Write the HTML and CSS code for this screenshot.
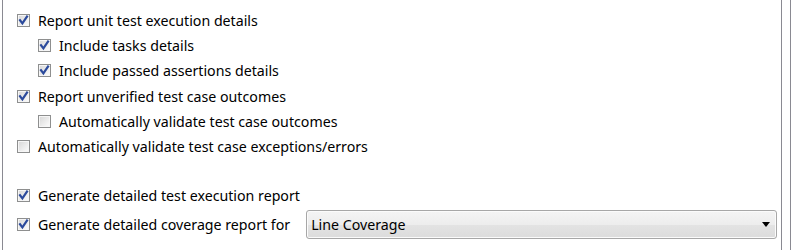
FILE: index.html
```html
<!DOCTYPE html>
<html>
<head>
<meta charset="utf-8">
<link rel="stylesheet" href="styles.css">
</head>
<body>
<div class="frame">
  <div class="panel">
    <label class="row"><span class="cb checked"><svg class="tick" viewBox="0 0 13 13" width="13" height="13"><polyline points="3,6.2 5.4,9.3 10,2.6"/></svg></span><span class="txt">Report unit test execution details</span></label>
    <label class="row sub"><span class="cb checked"><svg class="tick" viewBox="0 0 13 13" width="13" height="13"><polyline points="3,6.2 5.4,9.3 10,2.6"/></svg></span><span class="txt">Include tasks details</span></label>
    <label class="row sub"><span class="cb checked"><svg class="tick" viewBox="0 0 13 13" width="13" height="13"><polyline points="3,6.2 5.4,9.3 10,2.6"/></svg></span><span class="txt">Include passed assertions details</span></label>
    <label class="row tall"><span class="cb checked"><svg class="tick" viewBox="0 0 13 13" width="13" height="13"><polyline points="3,6.2 5.4,9.3 10,2.6"/></svg></span><span class="txt">Report unverified test case outcomes</span></label>
    <label class="row sub"><span class="cb"></span><span class="txt">Automatically validate test case outcomes</span></label>
    <label class="row"><span class="cb"></span><span class="txt">Automatically validate test case exceptions/errors</span></label>
    <div class="spacer"></div>
    <label class="row"><span class="cb checked"><svg class="tick" viewBox="0 0 13 13" width="13" height="13"><polyline points="3,6.2 5.4,9.3 10,2.6"/></svg></span><span class="txt">Generate detailed test execution report</span></label>
    <div class="row combo-row">
      <span class="cb checked"><svg class="tick" viewBox="0 0 13 13" width="13" height="13"><polyline points="3,6.2 5.4,9.3 10,2.6"/></svg></span><span class="txt">Generate detailed coverage report for</span>
      <div class="combo"><span class="combo-text">Line Coverage</span><span class="arrow"></span></div>
    </div>
  </div>
</div>
</body>
</html>
```
FILE: styles.css
```css
html, body {
  margin: 0;
  padding: 0;
  background: #fff;
}
body {
  font-family: "Noto Sans", "Open Sans", sans-serif;
  font-size: 14.2px;
  color: #000;
}
.frame {
  margin-left: 2px;
  width: 789px;
  height: 250px;
  box-sizing: border-box;
  border-left: 1px solid #8a8a92;
  border-right: 1px solid #8a8a92;
}
.panel {
  width: 779px;
  height: 250px;
  box-sizing: border-box;
  border-right: 1px solid #8a8a92;
  padding: 8px 0 0 14px;
}
.row {
  display: flex;
  align-items: center;
  height: 25px;
}
.row.tall {
  height: 26px;
  padding-top: 1px;
  box-sizing: border-box;
}
.row.sub {
  padding-left: 21px;
}
.spacer {
  height: 24px;
}
.combo-row {
  height: 33px;
}
.cb {
  width: 13px;
  height: 13px;
  box-sizing: border-box;
  border: 1px solid #8e8f8f;
  background: linear-gradient(135deg, #d6d6d6 0%, #f0f0f0 65%, #fdfdfd 100%);
  box-shadow: inset 0 0 0 1px #f6f6f6;
  flex: none;
  position: relative;
}
.tick {
  position: absolute;
  left: -1px;
  top: -1px;
  fill: none;
  stroke: #2b4a9c;
  stroke-width: 2.2;
  stroke-linecap: square;
  stroke-linejoin: miter;
}
.txt {
  margin-left: 8px;
  white-space: nowrap;
  line-height: 20px;
}
.combo {
  margin-left: 16px;
  width: 471px;
  height: 29px;
  box-sizing: border-box;
  border: 1px solid #a7a7a7;
  border-radius: 3px;
  background: linear-gradient(#f4f4f4 0%, #ededed 50%, #e3e3e3 51%, #dcdcdc 100%);
  box-shadow: inset 0 0 0 1px #fbfbfb;
  display: flex;
  align-items: center;
  justify-content: space-between;
  padding: 0 5px 0 4px;
}
.combo-text {
  white-space: nowrap;
}
.arrow {
  width: 0;
  height: 0;
  border-left: 4px solid transparent;
  border-right: 4px solid transparent;
  border-top: 5px solid #000;
  margin-right: 1px;
}
```
